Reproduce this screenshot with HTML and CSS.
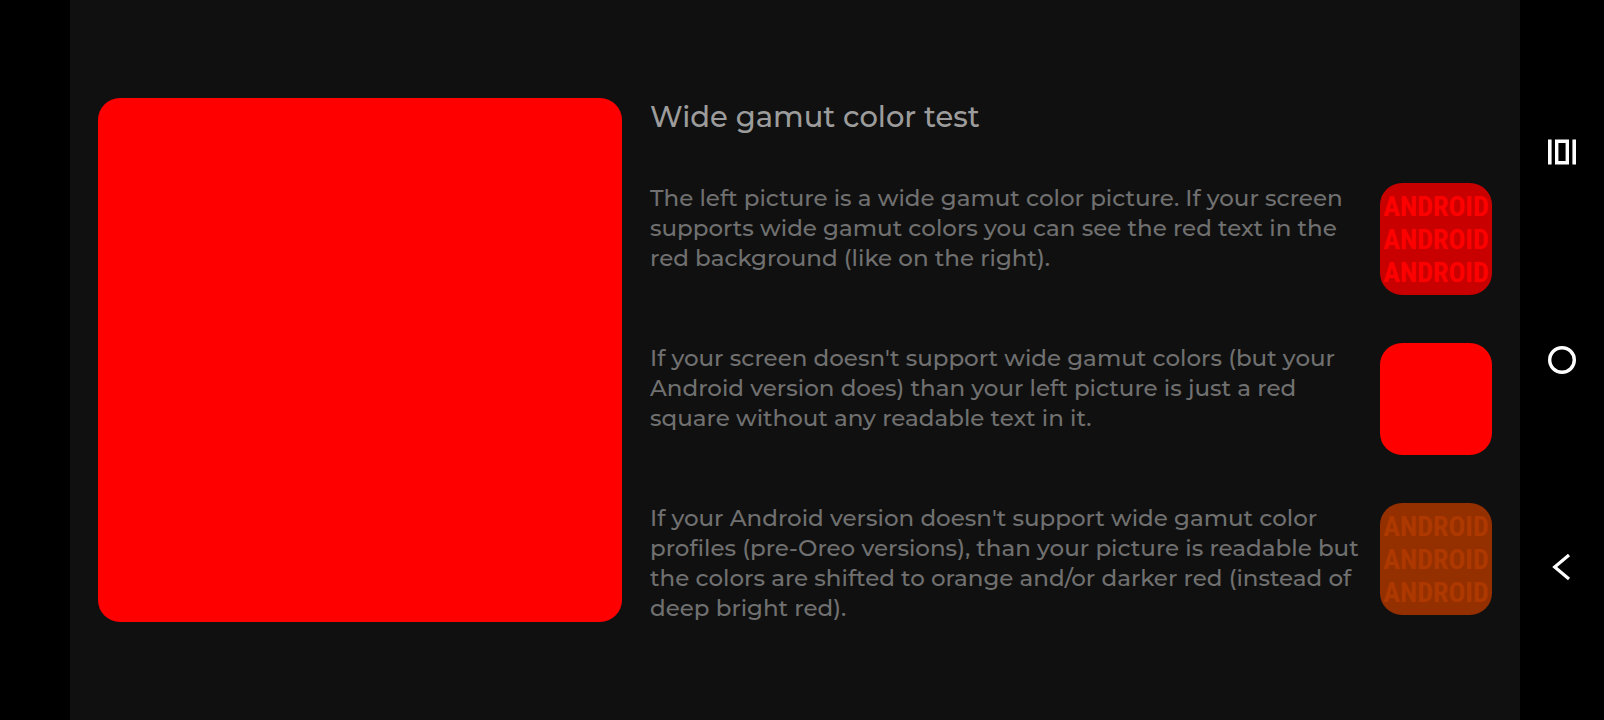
FILE: index.html
```html
<!DOCTYPE html>
<html lang="en">
<head>
<meta charset="utf-8">
<meta name="viewport" content="width=device-width, initial-scale=1">
<title>Wide gamut color test</title>
<link rel="stylesheet" href="styles.css">
</head>
<body>
<div class="screen">
  <main class="panel">
    <div class="picture" role="img" aria-label="Wide gamut picture"></div>
    <section class="info">
      <h1 class="title">Wide gamut color test</h1>
      <div class="row">
        <p class="text">The left picture is a wide gamut color picture. If your screen supports wide gamut colors you can see the red text in the red background (like on the right).</p>
        <div class="sample sample-wide"><span>ANDROID</span><span>ANDROID</span><span>ANDROID</span></div>
      </div>
      <div class="row">
        <p class="text">If your screen doesn't support wide gamut colors (but your Android version does) than your left picture is just a red square without any readable text in it.</p>
        <div class="sample sample-plain"></div>
      </div>
      <div class="row">
        <p class="text">If your Android version doesn't support wide gamut color profiles (pre-Oreo versions), than your picture is readable but the colors are shifted to orange and/or darker red (instead of deep bright red).</p>
        <div class="sample sample-shifted"><span>ANDROID</span><span>ANDROID</span><span>ANDROID</span></div>
      </div>
    </section>
  </main>
  <nav class="navbar" aria-label="System navigation">
    <button class="nav-button" type="button" aria-label="Recent apps">
      <svg width="28" height="28" viewBox="0 0 28 28"><path fill="#fff" fill-rule="evenodd" d="M0 1.5h3.6v25H0zM24.4 1.5H28v25h-3.6zM7 1.5h14v25H7zM10.4 5v18h7.2V5z"/></svg>
    </button>
    <button class="nav-button" type="button" aria-label="Home">
      <svg width="28" height="28" viewBox="0 0 28 28"><circle cx="14" cy="14" r="12.3" fill="none" stroke="#fff" stroke-width="3.4"/></svg>
    </button>
    <button class="nav-button" type="button" aria-label="Back">
      <svg width="28" height="28" viewBox="0 0 28 28"><path fill="none" stroke="#fff" stroke-width="3.2" d="M21 1 6.7 13 21 25"/></svg>
    </button>
  </nav>
</div>
</body>
</html>
```
FILE: styles.css
```css
* {
  box-sizing: border-box;
}

body {
  margin: 0;
  background: #000;
  font-family: Montserrat, Inter, "Liberation Sans", sans-serif;
}

.screen {
  display: flex;
  min-height: 100vh;
  padding-left: 70px;
}

.panel {
  flex: 1;
  display: flex;
  align-items: center;
  gap: 28px;
  padding: 28px;
  background: #101010;
}

.picture {
  flex: 0 1 524px;
  aspect-ratio: 1;
  border-radius: 22px;
  background: #f00;
}

.info {
  flex: 1;
  display: flex;
  flex-direction: column;
  gap: 48px;
  padding-top: 2px;
}

.title {
  margin: 0;
  font-size: 29px;
  line-height: 36px;
  font-weight: 500;
  color: #9c9c9c;
}

.row {
  display: flex;
  align-items: flex-start;
  justify-content: space-between;
  gap: 16px;
}

.text {
  margin: 0;
  font-size: 23px;
  font-weight: 500;
  line-height: 30px;
  color: #707070;
}

.sample {
  flex: none;
  width: 112px;
  height: 112px;
  padding: 7px 0;
  border-radius: 22px;
  display: flex;
  flex-direction: column;
  align-items: center;
  font: 700 28px/33px "Roboto Condensed", Roboto, sans-serif;
}

.sample-wide {
  background: #c80000;
  color: #f00;
}

.sample-plain {
  background: #f00;
}

.sample-shifted {
  background: #943000;
  color: #ad3800;
}

.navbar {
  width: 84px;
  padding: 48px 0;
  display: flex;
  flex-direction: column;
  justify-content: space-around;
  align-items: center;
}

.nav-button {
  display: flex;
  padding: 0;
  border: 0;
  background: none;
  cursor: pointer;
}
```
